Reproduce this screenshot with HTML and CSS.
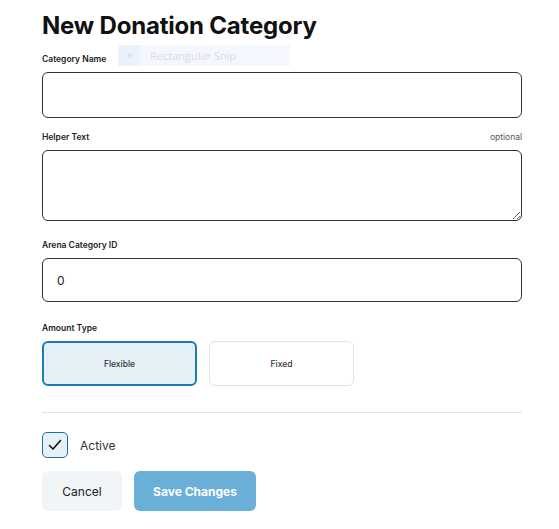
FILE: index.html
```html
<!DOCTYPE html>
<html>
<head>
<meta charset="utf-8">
<link rel="stylesheet" href="styles.css">
</head>
<body>
<div class="page">
  <h1 class="title">New Donation Category</h1>
  <div class="field">
    <div class="label-row"><label class="label">Category Name</label></div>
    <input class="input" type="text">
  </div>
  <div class="field">
    <div class="label-row"><label class="label">Helper Text</label><span class="optional">optional</span></div>
    <textarea class="textarea"></textarea>
  </div>
  <div class="field">
    <div class="label-row"><label class="label">Arena Category ID</label></div>
    <input class="input input-id" type="text" value="0">
  </div>
  <div class="field">
    <div class="label-row"><label class="label">Amount Type</label></div>
    <div class="choices">
      <div class="choice choice-flex selected">Flexible</div>
      <div class="choice choice-fixed">Fixed</div>
    </div>
  </div>
  <hr class="divider">
  <div class="check-row">
    <span class="checkbox">
      <svg width="14" height="12" viewBox="0 0 14 12"><path d="M1.5 6.5 L5 10 L12.5 1.5" fill="none" stroke="#111" stroke-width="1.6" stroke-linecap="round" stroke-linejoin="round"/></svg>
    </span>
    <span class="check-label">Active</span>
  </div>
  <div class="actions">
    <button class="btn btn-cancel">Cancel</button>
    <button class="btn btn-save">Save Changes</button>
  </div>
  <div class="snip"><span class="snip-icon"><span class="snip-dot"></span></span><span class="snip-text">Rectangular Snip</span></div>
</div>
</body>
</html>
```
FILE: styles.css
```css
* { box-sizing: border-box; }
body {
  margin: 0;
  background: #fff;
  font-family: Lato, "Open Sans", Arial, sans-serif;
  color: #1a1a1a;
}
.page {
  position: relative;
  width: 480px;
  margin-left: 42px;
  padding-top: 10px;
}
.title {
  margin: 0;
  font-family: Inter, Lato, sans-serif;
  font-weight: 700;
  font-size: 24px;
  line-height: 32px;
  letter-spacing: -0.2px;
  color: #111;
}
.field { display: flex; flex-direction: column; }
.label-row {
  display: flex;
  justify-content: space-between;
  align-items: center;
  height: 14px;
  margin-bottom: 6px;
}
.field:nth-of-type(1) .label-row { margin-top: 10px; }
.label {
  font-family: Inter, Lato, sans-serif;
  font-size: 8.5px;
  font-weight: 600;
  color: #222;
}
.optional {
  font-size: 8.5px;
  color: #555;
  font-family: Inter, Lato, sans-serif;
}
.input, .textarea {
  width: 480px;
  border: 1px solid #333;
  border-radius: 6px;
  font-family: Inter, Lato, sans-serif;
  font-size: 12px;
  outline: none;
  background: #fff;
}
.input { height: 46px; padding: 0 14px; }
.input-id { height: 44px; color: #222; }
.textarea { height: 71px; resize: vertical; display: block; }
.field:nth-of-type(2) .label-row { margin-top: 12px; }
.field:nth-of-type(3) .label-row { margin-top: 17px; }
.field:nth-of-type(4) .label-row { margin-top: 19px; }
.choices { display: flex; gap: 12px; }
.choice {
  height: 45px;
  display: flex;
  align-items: center;
  justify-content: center;
  border-radius: 6px;
  font-family: Inter, Lato, sans-serif;
  font-size: 8.5px;
  font-weight: 500;
  color: #333;
}
.choice-flex { width: 155px; }
.choice-fixed { width: 145px; border: 1px solid #e3e3e3; }
.selected { border: 2px solid #1c7bb6; background: #e6f0f7; }
.divider {
  border: none;
  border-top: 1px solid #e2e2e2;
  margin: 26px 0 0 0;
}
.check-row {
  display: flex;
  align-items: center;
  gap: 12px;
  margin-top: 19px;
}
.checkbox {
  width: 26px;
  height: 26px;
  border: 1px solid #1c6fa3;
  border-radius: 5px;
  background: #e6f0f7;
  display: flex;
  align-items: center;
  justify-content: center;
}
.check-label { font-size: 12px; color: #333; font-family: Inter, Lato, sans-serif; }
.actions { display: flex; gap: 12px; margin-top: 13px; }
.btn {
  height: 40px;
  border: none;
  border-radius: 6px;
  font-family: Inter, Lato, sans-serif;
  font-size: 12px;
  padding: 0;
}
.btn-cancel { width: 80px; background: #f1f5f7; color: #222; }
.btn-save { width: 122px; background: #6aafd8; color: #fff; font-weight: 700; }
.snip {
  position: absolute;
  left: 76px;
  top: 45px;
  width: 172px;
  height: 21px;
  background: #f3f8fe;
  display: flex;
  align-items: center;
}
.snip-icon {
  width: 22px; height: 21px; background: #eaf2fd;
  display: flex; align-items: center; justify-content: center;
}
.snip-dot { width: 5px; height: 5px; border-radius: 50%; background: #e4e4e4; }
.snip-text {
  margin-left: 10px;
  font-family: "Open Sans", sans-serif;
  font-size: 11px;
  color: #dcdcdc;
}
```
